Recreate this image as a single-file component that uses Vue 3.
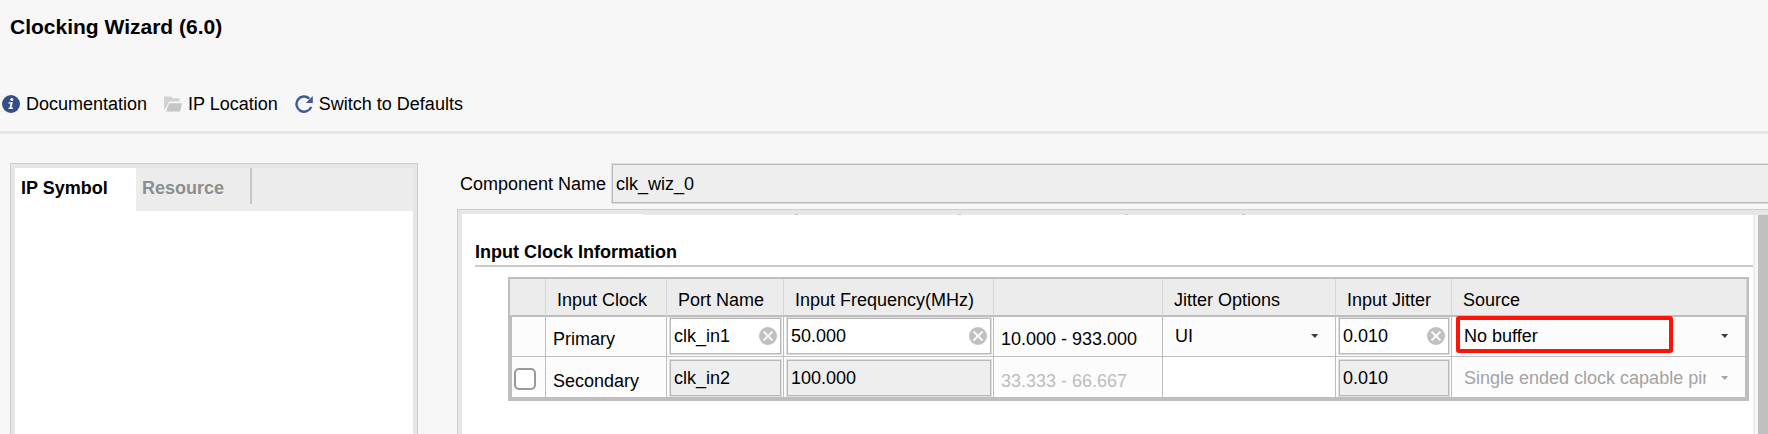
<script setup>
import { ref } from 'vue'

const componentName = ref('clk_wiz_0')
const secondaryEnabled = ref(false)
const headers = ['', 'Input Clock', 'Port Name', 'Input Frequency(MHz)', '', 'Jitter Options', 'Input Jitter', 'Source']
const rows = ref([
  { name: 'Primary', port: 'clk_in1', freq: '50.000', range: '10.000 - 933.000', units: 'UI', jitter: '0.010', source: 'No buffer', enabled: true },
  { name: 'Secondary', port: 'clk_in2', freq: '100.000', range: '33.333 - 66.667', units: '', jitter: '0.010', source: 'Single ended clock capable pin', enabled: false }
])
</script>

<template>
  <div class="wizard">
    <header class="top">
      <h1>Clocking Wizard (6.0)</h1>
      <nav class="toolbar" aria-label="IP actions">
        <button type="button" class="tool">
          <svg width="18" height="18" viewBox="0 0 18 18" aria-hidden="true">
            <circle cx="9" cy="9" r="9" fill="#344f87" />
            <circle cx="9.8" cy="4.6" r="1.5" fill="#fff" />
            <path d="M6.6 7.2h4.2l-1.3 5.4h1.5l-.3 1.5H6.4l.3-1.3h.8l1-4.2H6.3z" fill="#fff" />
          </svg>
          Documentation
        </button>
        <button type="button" class="tool">
          <svg width="18" height="18" viewBox="0 0 18 18" aria-hidden="true">
            <path d="M0 14.5V2.6Q0 1.6 1 1.6h6.4l1.4 1.6h5.9q1 0 1 1v2.3H5L2.7 12z" fill="#d2d2d2" />
            <path d="M5.2 8.2H18l-1.6 7.2q-.3 1.2-1.4 1.2H2.2z" fill="#c6c6c6" />
          </svg>
          IP Location
        </button>
        <button type="button" class="tool">
          <svg width="18" height="18" viewBox="0 0 18 18" aria-hidden="true">
            <path d="M14.3 3.6A7.6 7.6 0 1 0 16.2 11.8" fill="none" stroke="#3d5a93" stroke-width="2.4" />
            <path d="M17.8 1v7h-7z" fill="#3d5a93" />
          </svg>
          Switch to Defaults
        </button>
      </nav>
    </header>

    <main class="body">
      <section class="symbol-panel">
        <div class="tabs" role="tablist">
          <button type="button" role="tab" class="tab active" aria-selected="true">IP Symbol</button>
          <button type="button" role="tab" class="tab" aria-selected="false">Resource</button>
        </div>
      </section>

      <section class="config">
        <div class="name-row">
          <label for="component-name">Component Name</label>
          <input id="component-name" v-model="componentName" type="text" readonly />
        </div>

        <div class="config-panel">
          <div class="pane">
            <div class="tab-edge"><span class="e1"></span><span class="e2"></span><span class="e3"></span><span class="e4"></span></div>
            <h2>Input Clock Information</h2>
            <table>
              <colgroup>
                <col v-for="(h, i) in headers" :key="i" :class="'c' + i" />
              </colgroup>
              <thead>
                <tr>
                  <th v-for="(h, i) in headers" :key="i" scope="col">{{ h }}</th>
                </tr>
              </thead>
              <tbody>
                <tr v-for="row in rows" :key="row.name">
                  <td>
                    <input v-if="!row.enabled" v-model="secondaryEnabled" class="check" type="checkbox" aria-label="Enable secondary clock" />
                  </td>
                  <td><div class="text">{{ row.name }}</div></td>
                  <td>
                    <div class="field">
                      <input v-model="row.port" type="text" :readonly="!row.enabled" :aria-label="row.name + ' port name'" />
                      <button v-if="row.enabled" type="button" class="clear" aria-label="Clear port name">
                        <svg width="18" height="18" viewBox="0 0 18 18"><circle cx="9" cy="9" r="9" fill="#c0c0c0" /><path d="M4.6 4.6l8.8 8.8M13.4 4.6l-8.8 8.8" stroke="#fff" stroke-width="2" /></svg>
                      </button>
                    </div>
                  </td>
                  <td>
                    <div class="field">
                      <input v-model="row.freq" type="text" :readonly="!row.enabled" :aria-label="row.name + ' input frequency'" />
                      <button v-if="row.enabled" type="button" class="clear" aria-label="Clear input frequency">
                        <svg width="18" height="18" viewBox="0 0 18 18"><circle cx="9" cy="9" r="9" fill="#c0c0c0" /><path d="M4.6 4.6l8.8 8.8M13.4 4.6l-8.8 8.8" stroke="#fff" stroke-width="2" /></svg>
                      </button>
                    </div>
                  </td>
                  <td><div class="text" :class="{ dim: !row.enabled }">{{ row.range }}</div></td>
                  <td :class="{ blank: !row.units }">
                    <div v-if="row.units" class="choice">
                      <select v-model="row.units" :aria-label="row.name + ' jitter options'"><option>UI</option></select>
                      <svg class="arrow" width="8" height="5" viewBox="0 0 8 5" aria-hidden="true"><path d="M0 0h7L4 4z" fill="#3a3a3a" /></svg>
                    </div>
                  </td>
                  <td>
                    <div class="field">
                      <input v-model="row.jitter" type="text" :readonly="!row.enabled" :aria-label="row.name + ' input jitter'" />
                      <button v-if="row.enabled" type="button" class="clear" aria-label="Clear input jitter">
                        <svg width="18" height="18" viewBox="0 0 18 18"><circle cx="9" cy="9" r="9" fill="#c0c0c0" /><path d="M4.6 4.6l8.8 8.8M13.4 4.6l-8.8 8.8" stroke="#fff" stroke-width="2" /></svg>
                      </button>
                    </div>
                  </td>
                  <td>
                    <div class="choice">
                      <select v-model="row.source" :disabled="!row.enabled" :aria-label="row.name + ' source'"><option>{{ row.source }}</option></select>
                      <svg class="arrow" width="8" height="5" viewBox="0 0 8 5" aria-hidden="true"><path d="M0 0h7L4 4z" :fill="row.enabled ? '#3a3a3a' : '#a6a6a6'" /></svg>
                      <span v-if="row.enabled" class="highlight"></span>
                    </div>
                  </td>
                </tr>
              </tbody>
            </table>
          </div>
          <div class="scrollbar"></div>
        </div>
      </section>
    </main>
  </div>
</template>

<style>
body { background: #f7f7f7; }
</style>

<style scoped>
* { box-sizing: border-box; }
.wizard {
  display: flex;
  flex-direction: column;
  min-height: 100vh;
  overflow: hidden;
  background: #f7f7f7;
  color: #000;
  font: 18px/20px "Liberation Sans", Arial, sans-serif;
}
button, input, select { font: inherit; color: inherit; margin: 0; }
button { border: 0; padding: 0; background: none; }
.top { padding: 15px 10px 17px 2px; border-bottom: 3px solid #e6e6e6; }
h1 { margin: 0 0 55px 8px; font-size: 21px; line-height: 24px; }
.toolbar { display: flex; gap: 17px; }
.tool { display: flex; align-items: center; gap: 6px; white-space: nowrap; }
.body { flex: 1; display: flex; gap: 39px; padding: 29px 0 0 10px; }

.symbol-panel {
  flex: 0 0 408px;
  display: flex;
  flex-direction: column;
  padding: 4px 4px 0;
  border: 1px solid #cdcdcd;
  border-bottom: 0;
  background: linear-gradient(#fff, #fff) content-box, #e6e6e6;
}
.tabs { display: flex; height: 43px; background: #ececec; }
.tab {
  height: 36px;
  padding: 4px 26px 0 6px;
  border-right: 2px solid #c6c6c6;
  font-weight: bold;
  color: #8e8e8e;
}
.tab.active { width: 121px; height: 43px; padding: 4px 0 7px 6px; border: 0; background: #fff; color: #000; text-align: left; }

.config { flex: 1; min-width: 0; display: flex; flex-direction: column; padding-top: 1px; }
.name-row { display: flex; align-items: center; gap: 6px; padding-left: 3px; margin-bottom: 6px; }
.name-row label { flex: 0 0 146px; white-space: nowrap; }
input[type="text"] {
  width: 100%;
  height: 36px;
  padding: 0 3px;
  border: 1px solid #b8b8b8;
  border-radius: 0;
  box-shadow: 0 0 0 1px #dedede;
  background: #fff;
  outline: 0;
}
input[type="text"]:read-only { background: #eee; }
.name-row input[type="text"] { flex: 1; height: 39px; padding-top: 1px; border-right: 0; }

.config-panel {
  flex: 1;
  display: flex;
  padding: 4px 0 0 4px;
  border: solid #cdcdcd;
  border-width: 1px 0 0 1px;
  background: #e6e6e6;
}
.pane { flex: 1; min-width: 0; background: #fff; padding-left: 13px; }
.tab-edge { display: flex; height: 1px; margin-left: 168px; background: #ececec; }
.tab-edge span { border-right: 3px solid #c6c6c6; }
.e1 { width: 155px; }
.e2 { width: 163px; }
.e3 { width: 167px; }
.e4 { width: 117px; }
h2 { margin: 27px 0 10px; padding-bottom: 3px; border-bottom: 2px solid #cacaca; font-size: 18px; line-height: 20px; }
.scrollbar { width: 15px; margin-top: 1px; background: #f7f7f7; border-left: 2px solid #ececec; border-right: 10px solid #c0c0c0; }

table {
  width: calc(100% - 37px);
  margin-left: 33px;
  table-layout: fixed;
  border-collapse: separate;
  border-spacing: 0;
  border: 2px solid #bebebe;
}
.c0 { width: 36px; }
.c1 { width: 121px; }
.c2 { width: 117px; }
.c3 { width: 210px; }
.c4 { width: 169px; }
.c5 { width: 173px; }
.c6 { width: 116px; }
th {
  height: 38px;
  padding: 5px 0 0 11px;
  border-right: 1px solid #d6d6d6;
  border-bottom: 2px solid #bebebe;
  background: #ececec;
  font-weight: normal;
  text-align: left;
  white-space: nowrap;
}
td {
  height: 40px;
  padding: 1px 0 0;
  vertical-align: top;
  border-right: 1px solid #bebebe;
  border-bottom: 1px solid #bebebe;
  background: #fcfcfc;
}
td:first-child { border-left: 2px solid #bebebe; }
td:last-child { border-right-width: 2px; }
tr:last-child td { height: 42px; padding-top: 3px; border-bottom-width: 2px; }
td.blank { background: #fff; }
.text { padding: 11px 0 0 7px; white-space: nowrap; }
.dim { color: #bcbcbc; }
.field { position: relative; padding: 0 2px 0 3px; }
.clear { position: absolute; top: 9px; right: 6px; width: 18px; height: 18px; }
.clear svg { display: block; }
.check {
  appearance: none;
  display: block;
  width: 22px;
  height: 22px;
  margin: 8px 0 0 2px;
  border: 2px solid #999;
  border-radius: 5px;
  background: #fff;
}
.choice { position: relative; }
select {
  display: block;
  appearance: none;
  width: 100%;
  height: 36px;
  padding: 0 39px 0 12px;
  border: 0;
  background: transparent;
  outline: 0;
}
select:disabled { color: #a3a3a3; opacity: 1; }
.arrow { position: absolute; top: 16px; right: 16px; pointer-events: none; }
thead + tbody tr:first-child td { border-top: 0; }
.highlight {
  position: absolute;
  top: -2px;
  left: 4px;
  width: 217px;
  height: 37px;
  border: 4px solid #ff1208;
  border-radius: 3px;
  pointer-events: none;
}
</style>
